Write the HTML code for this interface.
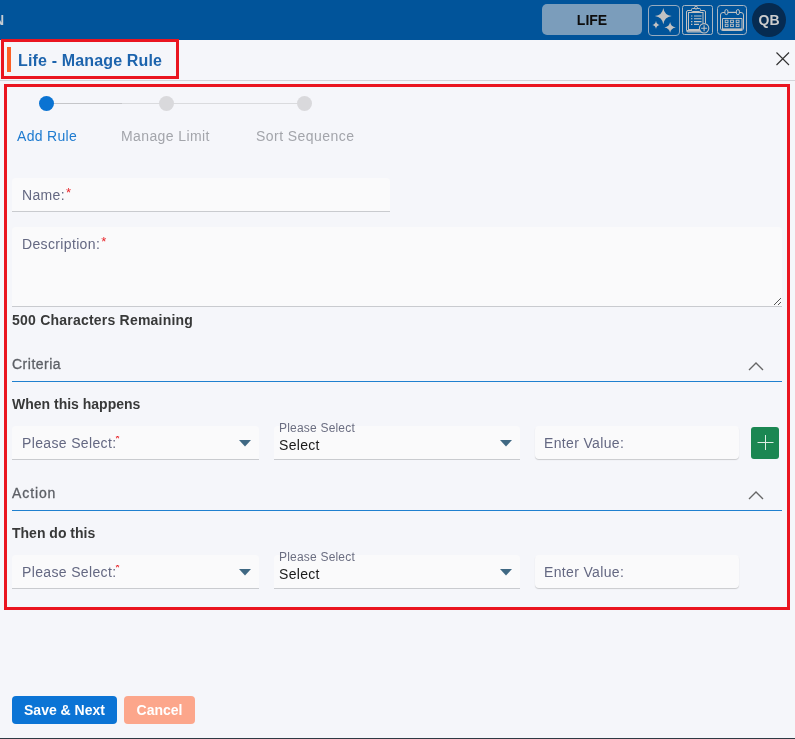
<!DOCTYPE html>
<html><head><meta charset="utf-8">
<style>
*{box-sizing:border-box;margin:0;padding:0}
html,body{width:795px;height:739px;overflow:hidden;background:#f5f6fa;font-family:"Liberation Sans",sans-serif;position:relative}
.abs{position:absolute;line-height:16px;will-change:transform}
#hdr{left:0;top:0;width:795px;height:40px;background:#01549a}
#lifebtn{left:542px;top:4px;width:100px;height:31px;border-radius:5px;background:#7b9dbb;color:#0d0d0d;font-weight:bold;font-size:14px;text-align:center;line-height:33px}
.ico{top:5px;width:31px;height:31px}
#avatar{left:752px;top:3px;width:34px;height:34px;border-radius:50%;background:#062b51;color:#cdcdcd;font-weight:bold;font-size:14px;text-align:center;line-height:34px}
#box1{left:1px;top:39px;width:178px;height:40px;border:3px solid #ea1520}
#obar{left:7px;top:47px;width:4px;height:25px;background:#fc5f26}
#title{left:18px;top:52px;letter-spacing:0.15px;font-size:16px;line-height:18px;font-weight:bold;color:#1d64ad;white-space:nowrap}
#hline{left:0;top:80px;width:795px;height:1px;background:#d3d5da}
#box2{left:4px;top:84px;width:786px;height:526px;border:3px solid #ea1520}
.circ{width:15px;height:15px;border-radius:50%;top:96px}
.lbl{font-size:14px;top:128px;white-space:nowrap}
.inp{background:#fafafb;border-bottom:1px solid #c9cbcf;border-radius:4px 4px 0 0}
.ph{font-size:14px;color:#646882;white-space:nowrap;letter-spacing:0.35px}
.req{color:#e8262b;font-size:13px;position:relative;top:-3px;left:1px}
.bold{font-size:14px;font-weight:bold;color:#383939;white-space:nowrap}
.sec{font-size:14px;color:#5d6066;white-space:nowrap;-webkit-text-stroke:0.3px #5d6066}
.bline{height:1px;background:#1f80cf}
.btn{color:#fff;font-weight:bold;font-size:14px;text-align:center;border-radius:4px}
.ev{background:#fafafb;border-radius:4px;box-shadow:0 1px 1px rgba(0,0,0,.18)}
.small{font-size:12px;letter-spacing:0.2px;color:#6b6e82;white-space:nowrap;line-height:14px}
.sel{font-size:14px;letter-spacing:0.3px;color:#1a1a1a;white-space:nowrap}
</style></head><body>
<div id="hdr" class="abs"></div>
<div class="abs" style="left:-6px;top:12px;font-size:14px;font-weight:bold;color:#c6ccd2">N</div>
<div id="lifebtn" class="abs">LIFE</div>
<svg class="abs" style="left:640px;top:0px" width="110" height="40" viewBox="640 0 110 40">
<rect x="648.5" y="5.5" width="31" height="30" rx="3.5" fill="none" stroke="#97abbf" stroke-width="1"/>
<path d="M663.3 7.900000000000002 Q664.39 15.03 671.6999999999999 16.1 Q664.39 17.17 663.3 24.3 Q662.21 17.17 654.9 16.1 Q662.21 15.03 663.3 7.900000000000002Z" fill="#c2c2c2"/>
<path d="M656 20.7 Q656.48 24.35 659.7 24.9 Q656.48 25.45 656 29.099999999999998 Q655.52 25.45 652.3 24.9 Q655.52 24.35 656 20.7Z" fill="#c2c2c2"/>
<path d="M670.1 22.0 Q670.84 26.70 675.8000000000001 27.4 Q670.84 28.10 670.1 32.8 Q669.36 28.10 664.4 27.4 Q669.36 26.70 670.1 22.0Z" fill="#c2c2c2"/>
<rect x="682.5" y="5.5" width="30" height="29" rx="2" fill="none" stroke="#aab6c3" stroke-width="1"/>
<rect x="686.5" y="10.5" width="19" height="21.5" rx="1.5" fill="none" stroke="#c2c2c2" stroke-width="1"/>
<rect x="688.5" y="12.5" width="14.5" height="17" fill="none" stroke="#c2c2c2" stroke-width="1"/>
<path d="M687 30.8h18" stroke="#c2c2c2" stroke-width="1.6"/>
<rect x="691.5" y="8.5" width="9" height="3" rx="1" fill="#01549a" stroke="#c2c2c2" stroke-width="1"/>
<circle cx="696" cy="7.6" r="1.4" fill="#01549a" stroke="#c2c2c2" stroke-width="1"/>
<path d="M694 16h7.5M694 18.8h7.5M694 21.6h7.5M694 24.4h5" stroke="#c2c2c2" stroke-width="1.1"/>
<path d="M691 16h1.4M691 18.8h1.4M691 21.6h1.4M691 24.4h1.4" stroke="#c2c2c2" stroke-width="1.1"/>
<circle cx="704.1" cy="28.3" r="4.7" fill="#01549a" stroke="#c2c2c2" stroke-width="1.1"/>
<path d="M704.1 25.3v6M701.1 28.3h6" stroke="#c2c2c2" stroke-width="1.1"/>
<rect x="717.5" y="5.5" width="29" height="29" rx="3" fill="none" stroke="#aab6c3" stroke-width="1"/>
<rect x="720.5" y="12.5" width="23" height="18" rx="2.5" fill="none" stroke="#c2c2c2" stroke-width="1"/>
<path d="M722.5 18.5h19.5v10.5h-19.5z" fill="none" stroke="#c2c2c2" stroke-width="1"/>
<path d="M722 29.6h20" stroke="#c2c2c2" stroke-width="1.6"/>
<path d="M728 12.3h8.5" stroke="#c2c2c2" stroke-width="1"/>
<rect x="724.9" y="9.6" width="3" height="5" rx="1.5" fill="#01549a" stroke="#c2c2c2" stroke-width="1"/>
<rect x="736.4" y="9.6" width="3" height="5" rx="1.5" fill="#01549a" stroke="#c2c2c2" stroke-width="1"/>
<g fill="none" stroke="#c2c2c2" stroke-width="0.9">
<rect x="725.2" y="20.2" width="2.8" height="2.4"/><rect x="730.6" y="20.2" width="2.8" height="2.4"/><rect x="736.2" y="20.2" width="2.8" height="2.4"/>
<rect x="725.2" y="24.2" width="2.8" height="2.4"/><rect x="730.6" y="24.2" width="2.8" height="2.4"/><rect x="736.2" y="24.2" width="2.8" height="2.4"/>
</g>
</svg>
<div id="avatar" class="abs">QB</div>

<div id="box1" class="abs"></div>
<div id="obar" class="abs"></div>
<div id="title" class="abs">Life - Manage Rule</div>
<svg class="abs" style="left:775px;top:51px" width="16" height="16" viewBox="0 0 16 16"><path d="M1.5 1.5L14 14M14 1.5L1.5 14" stroke="#333" stroke-width="1.15"/></svg>
<div id="hline" class="abs"></div>
<div id="box2" class="abs"></div>

<!-- stepper -->
<div class="abs" style="left:54px;top:103px;width:68px;height:1px;background:#c5c6c9"></div>
<div class="abs" style="left:122px;top:103px;width:182px;height:1px;background:#dadbde"></div>
<div class="abs circ" style="left:39px;background:#0a73d2"></div>
<div class="abs circ" style="left:158.5px;background:#d9d9dc"></div>
<div class="abs circ" style="left:296.5px;background:#d9d9dc"></div>
<div class="abs lbl" style="left:17px;color:#1e7bd0;letter-spacing:0.3px">Add Rule</div>
<div class="abs lbl" style="left:121px;color:#a3a5ab;letter-spacing:0.4px">Manage Limit</div>
<div class="abs lbl" style="left:256px;color:#a3a5ab;letter-spacing:0.45px">Sort Sequence</div>

<!-- name -->
<div class="abs inp" style="left:12px;top:178px;width:378px;height:34px"></div>
<div class="abs ph" style="left:22px;top:187px">Name:<span class="req">*</span></div>
<div class="abs inp" style="left:12px;top:227px;width:770px;height:80px"></div>
<svg class="abs" style="left:773px;top:297px" width="10" height="9" viewBox="0 0 10 9"><path d="M1 8L8 1M5 8L8 5" stroke="#555" stroke-width="1"/></svg>
<div class="abs ph" style="left:22px;top:236px">Description:<span class="req">*</span></div>
<div class="abs bold" style="left:12px;top:312px;letter-spacing:0.22px">500 Characters Remaining</div>

<!-- criteria -->
<div class="abs sec" style="left:12px;top:356px;letter-spacing:0.5px">Criteria</div>
<svg class="abs" style="left:748px;top:361px" width="16" height="10" viewBox="0 0 16 10"><path d="M1 9L8 2L15 9" fill="none" stroke="#666" stroke-width="1.4"/></svg>
<div class="abs bline" style="left:12px;top:381px;width:770px"></div>
<div class="abs bold" style="left:12px;top:396px">When this happens</div>
<div class="abs inp" style="left:12px;top:426px;width:247px;height:34px"></div>
<div class="abs ph" style="left:22px;top:435px">Please Select:</div><div class="abs" style="left:115px;top:436px;width:7px;height:4px;overflow:hidden"><span class="req" style="position:absolute;left:0;top:-5px;line-height:16px">*</span></div>
<svg class="abs" style="left:239px;top:440px" width="12" height="7" viewBox="0 0 12 7"><path d="M0 0H12L6 6.5Z" fill="#3f6883"/></svg>
<div class="abs inp" style="left:274px;top:426px;width:246px;height:34px"></div>
<div class="abs small" style="left:279px;top:421px">Please Select</div>
<div class="abs sel" style="left:279px;top:437px">Select</div>
<svg class="abs" style="left:500px;top:440px" width="12" height="7" viewBox="0 0 12 7"><path d="M0 0H12L6 6.5Z" fill="#3f6883"/></svg>
<div class="abs ev" style="left:535px;top:426px;width:204px;height:33px"></div>
<div class="abs ph" style="left:544px;top:435px">Enter Value:</div>
<div class="abs" style="left:751px;top:427px;width:28px;height:32px;background:#1b8752;border-radius:3px"></div>
<svg class="abs" style="left:757px;top:435px" width="17" height="16" viewBox="0 0 17 16"><path d="M8.5 0V15M0.5 7.5H16.5" stroke="#dfeee4" stroke-width="1"/></svg>

<!-- action -->
<div class="abs sec" style="left:12px;top:485px;letter-spacing:0.9px">Action</div>
<svg class="abs" style="left:748px;top:490px" width="16" height="10" viewBox="0 0 16 10"><path d="M1 9L8 2L15 9" fill="none" stroke="#666" stroke-width="1.4"/></svg>
<div class="abs bline" style="left:12px;top:510px;width:770px"></div>
<div class="abs bold" style="left:12px;top:525px">Then do this</div>
<div class="abs inp" style="left:12px;top:555px;width:247px;height:34px"></div>
<div class="abs ph" style="left:22px;top:564px">Please Select:</div><div class="abs" style="left:115px;top:565px;width:7px;height:4px;overflow:hidden"><span class="req" style="position:absolute;left:0;top:-5px;line-height:16px">*</span></div>
<svg class="abs" style="left:239px;top:569px" width="12" height="7" viewBox="0 0 12 7"><path d="M0 0H12L6 6.5Z" fill="#3f6883"/></svg>
<div class="abs inp" style="left:274px;top:555px;width:246px;height:34px"></div>
<div class="abs small" style="left:279px;top:550px">Please Select</div>
<div class="abs sel" style="left:279px;top:566px">Select</div>
<svg class="abs" style="left:500px;top:569px" width="12" height="7" viewBox="0 0 12 7"><path d="M0 0H12L6 6.5Z" fill="#3f6883"/></svg>
<div class="abs ev" style="left:535px;top:555px;width:204px;height:33px"></div>
<div class="abs ph" style="left:544px;top:564px">Enter Value:</div>

<!-- buttons -->
<div class="abs btn" style="left:12px;top:696px;width:105px;height:28px;line-height:28px;background:#0b74d5">Save &amp; Next</div>
<div class="abs btn" style="left:124px;top:696px;width:71px;height:28px;line-height:28px;background:#fca68b">Cancel</div>
<div class="abs" style="left:0;top:738px;width:795px;height:1px;background:#2e3a44"></div>
</body></html>
